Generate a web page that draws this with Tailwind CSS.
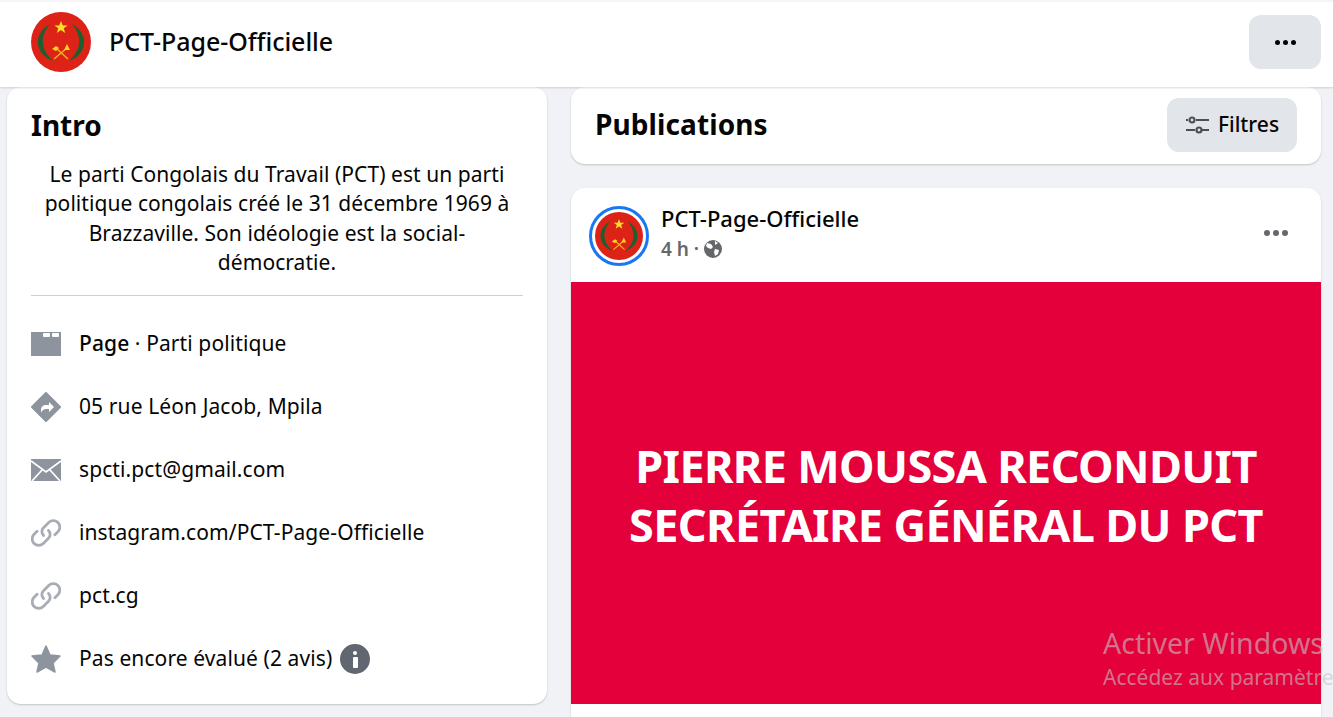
<!DOCTYPE html>
<html lang="fr">
<head>
<meta charset="utf-8">
<title>PCT-Page-Officielle</title>
<script src="https://cdn.jsdelivr.net/npm/@tailwindcss/browser@4"></script>
</head>
<body class="h-[717px] overflow-hidden bg-[#f0f2f5] font-['Noto_Sans',sans-serif] text-[#050505]">
  <!-- Logo reutilise -->
  <svg class="hidden">
    <symbol id="logo" viewBox="0 0 60 60">
      <circle cx="30" cy="30" r="30" fill="#dd2318"/>
      <path d="M19 12C10 17 6 25 7 32c1 8 7 14 15 17-5-5-9-10-10-17-1-7 2-14 7-20z" fill="#1d5f2e"/>
      <path d="M41 12c9 5 13 13 12 20-1 8-7 14-15 17 5-5 9-10 10-17 1-7-2-14-7-20z" fill="#1d5f2e"/>
      <path d="M30 9l1.8 4.4h4.8l-3.9 2.9 1.5 4.7-4.2-2.9-4.2 2.9 1.5-4.7-3.9-2.9h4.8z" fill="#fbe122"/>
      <path d="M25 36l12 11M36 36L23 47" stroke="#f2b21c" stroke-width="1.5"/>
      <path d="M21 37l4-3 3 2-3 3z M33 38l3-6 3 6z" fill="#fbd31f"/>
    </symbol>
  </svg>

  <!-- Header -->
  <header class="h-[87px] bg-white border-t-2 border-[#f5f5f5] shadow-[0_1px_2px_rgba(0,0,0,0.15)] relative z-10 flex items-center justify-between pl-[31px] pr-[12px] pb-[5px]">
    <div class="flex items-center gap-[18px]">
      <svg class="w-[60px] h-[60px]"><use href="#logo"/></svg>
      <span class="text-[25px] font-medium tracking-[-0.05px]">PCT-Page-Officielle</span>
    </div>
    <button class="w-[72px] h-[54px] rounded-[12px] bg-[#e2e5e9] flex items-center justify-center gap-[3px]">
      <span class="w-[5px] h-[5px] rounded-full bg-[#050505]"></span>
      <span class="w-[5px] h-[5px] rounded-full bg-[#050505]"></span>
      <span class="w-[5px] h-[5px] rounded-full bg-[#050505]"></span>
    </button>
  </header>

  <main class="flex items-start pl-[7px] pr-[12px] gap-[24px]">
    <!-- Intro -->
    <section class="w-[540px] h-[617px] shrink-0 bg-white rounded-[14px] shadow-[0_1px_2px_rgba(0,0,0,0.2)] px-[24px] pt-[18px]">
      <h2 class="text-[28px] leading-[40px] font-bold">Intro</h2>
      <p class="mt-[15px] text-[21px] leading-[29.4px] text-center tracking-[0.06px]">Le parti Congolais du Travail (PCT) est un parti<br>politique congolais créé le 31 décembre 1969 à<br>Brazzaville. Son idéologie est la social-<br>démocratie.</p>
      <div class="mt-[17px] border-t border-[#ced0d4]"></div>
      <ul class="mt-[17px] text-[21px] tracking-[0.1px]">
        <li class="h-[63px] flex items-center gap-[18px]">
          <svg class="w-[30px] h-[30px] shrink-0" viewBox="0 0 30 30" fill="#8d949e"><rect y="3" width="30" height="24"/><rect x="12" y="4" width="7" height="4" rx="1" fill="#fff"/><rect x="21" y="4" width="7" height="4" rx="1" fill="#fff"/></svg>
          <span><b class="font-medium">Page</b> · Parti politique</span>
        </li>
        <li class="h-[63px] flex items-center gap-[18px]">
          <svg class="w-[30px] h-[30px] shrink-0" viewBox="0 0 30 30"><path d="M15 1l14 14-14 14L1 15z" fill="#8d949e" stroke="#8d949e" stroke-width="2" stroke-linejoin="round"/><path d="M10 21v-3c0-3 2-5 5-5h3v-3l5 5-5 5v-3h-3c-2 0-4 1-5 4z" fill="#fff"/></svg>
          <span>05 rue Léon Jacob, Mpila</span>
        </li>
        <li class="h-[63px] flex items-center gap-[18px]">
          <svg class="w-[30px] h-[30px] shrink-0" viewBox="0 0 30 30"><rect y="4" width="30" height="22" fill="#8d949e"/><path d="M0 6l15 11L30 6M1 26l10-11M29 26L19 15" fill="none" stroke="#fff" stroke-width="1.8"/></svg>
          <span>spcti.pct@gmail.com</span>
        </li>
        <li class="h-[63px] flex items-center gap-[18px]">
          <svg class="w-[30px] h-[30px] shrink-0" viewBox="0 0 30 30" fill="none" stroke="#a8adb5" stroke-width="2.8" stroke-linecap="round"><path d="M12.5 17.5a5.5 5.5 0 0 1 0-7.8l5.2-5.2a6.5 6.5 0 0 1 9.2 9.2l-3 3"/><path d="M17.5 12.5a5.5 5.5 0 0 1 0 7.8l-5.2 5.2a6.5 6.5 0 0 1-9.2-9.2l3-3"/></svg>
          <span>instagram.com/PCT-Page-Officielle</span>
        </li>
        <li class="h-[63px] flex items-center gap-[18px]">
          <svg class="w-[30px] h-[30px] shrink-0" viewBox="0 0 30 30" fill="none" stroke="#a8adb5" stroke-width="2.8" stroke-linecap="round"><path d="M12.5 17.5a5.5 5.5 0 0 1 0-7.8l5.2-5.2a6.5 6.5 0 0 1 9.2 9.2l-3 3"/><path d="M17.5 12.5a5.5 5.5 0 0 1 0 7.8l-5.2 5.2a6.5 6.5 0 0 1-9.2-9.2l3-3"/></svg>
          <span>pct.cg</span>
        </li>
        <li class="h-[63px] flex items-center gap-[18px]">
          <svg class="w-[30px] h-[30px] shrink-0" viewBox="0 0 30 30"><path d="M15 2l4 9 10 1-7 7 2 9-9-5-9 5 2-9-7-7 10-1z" fill="#8d949e" stroke="#8d949e" stroke-linejoin="round" stroke-width="1.5"/></svg>
          <span class="flex items-center gap-[8px]">Pas encore évalué (2 avis)
            <span class="w-[30px] h-[30px] rounded-full bg-[#606770] flex flex-col items-center justify-center gap-[2px]">
              <span class="w-[4px] h-[4px] rounded-full bg-white"></span>
              <span class="w-[5px] h-[11px] rounded-[1px] bg-white"></span>
            </span>
          </span>
        </li>
      </ul>
    </section>

    <!-- Colonne publications -->
    <div class="w-[750px] flex flex-col gap-[24px]">
      <section class="h-[77px] bg-white rounded-[14px] shadow-[0_1px_2px_rgba(0,0,0,0.2)] flex items-center justify-between pl-[24px] pr-[24px]">
        <h2 class="text-[28px] font-bold tracking-[0.1px] mb-[4px]">Publications</h2>
        <button class="w-[130px] h-[54px] mt-[-2px] rounded-[12px] bg-[#e2e5e9] flex items-center justify-center gap-[8px] text-[21px] font-medium">
          <svg class="w-[25px] h-[20px]" viewBox="0 0 25 20" fill="none" stroke="#4b4f56" stroke-width="2.2"><path d="M1 5h2M11 5h13M1 15h9M17 15h7"/><circle cx="7" cy="5" r="2.5"/><circle cx="14" cy="15" r="2.5"/></svg>
          Filtres
        </button>
      </section>

      <article class="h-[529px] bg-white rounded-t-[14px] shadow-[0_1px_2px_rgba(0,0,0,0.2)] overflow-hidden">
        <div class="h-[94px] flex items-start justify-between pl-[18px] pr-[33px] pt-[18px]">
          <div class="flex gap-[12px]">
            <span class="w-[60px] h-[60px] rounded-full border-[3px] border-[#1877f2] flex items-center justify-center">
              <svg class="w-[48px] h-[48px]"><use href="#logo"/></svg>
            </span>
            <div>
              <div class="-mt-[1px] text-[22px] leading-[27px] font-medium">PCT-Page-Officielle</div>
              <div class="mt-[5px] flex items-center gap-[5px] text-[19px] leading-[24px] font-semibold text-[#65676b]">
                4 h · 
                <svg class="w-[18px] h-[18px]" viewBox="0 0 18 18"><circle cx="9" cy="9" r="9" fill="#65676b"/><path d="M3 3l4 1 2 3-2 2-3-1-2-2zM11 9l4 1-1 4-3 2-1-4zM11 1l3 2-3 2z" fill="#fff"/></svg>
              </div>
            </div>
          </div>
          <div class="mt-[24px] flex items-center gap-[3px]">
            <span class="w-[6px] h-[6px] rounded-full bg-[#65676b]"></span>
            <span class="w-[6px] h-[6px] rounded-full bg-[#65676b]"></span>
            <span class="w-[6px] h-[6px] rounded-full bg-[#65676b]"></span>
          </div>
        </div>
        <div class="h-[422px] bg-[#e3003b] flex items-center justify-center text-center text-white text-[45px] leading-[59px] font-bold tracking-[-0.65px] pt-[3px]">
          <p>PIERRE MOUSSA RECONDUIT<br>SECRÉTAIRE GÉNÉRAL DU PCT</p>
        </div>
      </article>
    </div>
  </main>

  <!-- Filigrane Windows -->
  <div class="absolute left-[1103px] top-[625px] w-[230px] h-[70px] overflow-hidden whitespace-nowrap text-[#c4c4c4]/60 z-20">
    <div class="text-[28.5px] leading-[36px]">Activer Windows</div>
    <div class="text-[21px] leading-[32px]">Accédez aux paramètres</div>
  </div>
</body>
</html>
